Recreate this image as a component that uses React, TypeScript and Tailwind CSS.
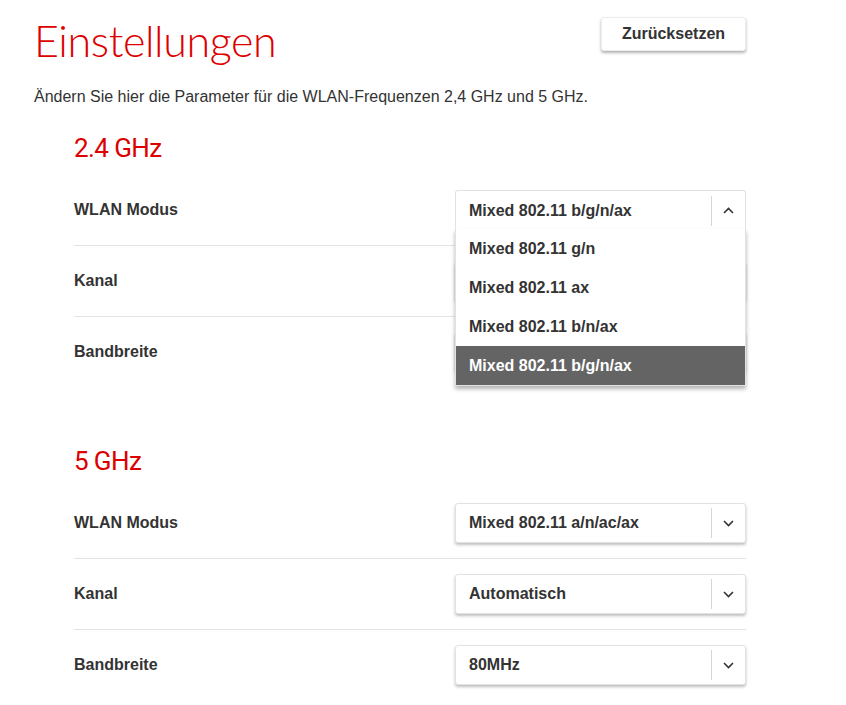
import React from "react";

const RED = "text-[#dc0000]";
const HEAD_FONT = { fontFamily: 'Lato, "Open Sans", sans-serif' };
const SUB_FONT = { fontFamily: 'Roboto, Lato, sans-serif' };

function Chevron({ up }: { up?: boolean }) {
  return (
    <svg width="11" height="7" viewBox="0 0 11 7" className={up ? "rotate-180" : ""}>
      <path d="M1 1l4.5 4.5L10 1" fill="none" stroke="#333" strokeWidth="1.6" />
    </svg>
  );
}

function Select({ value, options, open }: { value: string; options?: string[]; open?: boolean }) {
  return (
    <div className="relative w-[291px]">
      <div
        className={`flex h-[40px] items-center bg-white border border-[#e2e2e2] ${
          open ? "rounded-t-[3px] border-b-0" : "rounded-[3px] shadow-[0_2px_3px_rgba(0,0,0,0.25)]"
        }`}
      >
        <span className="flex-1 pl-[13px] text-[16px] font-bold text-[#333]">{value}</span>
        <span className="h-[30px] w-px bg-[#d6d6d6]" />
        <span className="flex w-[33px] justify-center">
          <Chevron up={open} />
        </span>
      </div>
      {open && options ? (
        <div className="absolute left-0 right-0 top-[39px] z-10 bg-white border border-t-0 border-[#e2e2e2] shadow-[0_3px_4px_rgba(0,0,0,0.3)]">
          {options.map((o) => (
            <div
              key={o}
              className={`flex h-[39px] items-center pl-[13px] text-[16px] font-bold ${
                o === value ? "bg-[#646464] text-white" : "text-[#333]"
              }`}
            >
              {o}
            </div>
          ))}
        </div>
      ) : null}
    </div>
  );
}

function Row({ label, last, children }: { label: string; last?: boolean; children: React.ReactNode }) {
  return (
    <div className={`flex items-center justify-between py-[15px] ${last ? "" : "border-b border-[#e4e4e4]"}`}>
      <span className="text-[16px] font-bold text-[#333]">{label}</span>
      {children}
    </div>
  );
}

export default function App() {
  const font = { fontFamily: '"Liberation Sans", Arial, sans-serif' };
  return (
    <div className="min-h-[705px] w-[846px] bg-white pl-[34px]" style={font}>
      <div className="flex w-[712px] items-start justify-between pt-[17px]">
        <h1 className={`${RED} text-[43px] leading-[48px] tracking-[-0.4px] font-light`} style={HEAD_FONT}>
          Einstellungen
        </h1>
        <button className="h-[34px] w-[145px] rounded-[3px] bg-white border border-[#ececec] shadow-[0_2px_3px_rgba(0,0,0,0.3)] text-[16px] font-bold text-[#333]">
          Zurücksetzen
        </button>
      </div>
      <p className="mt-[20px] text-[16px] text-[#333]">
        Ändern Sie hier die Parameter für die WLAN-Frequenzen 2,4 GHz und 5 GHz.
      </p>

      <div className="ml-[40px] w-[672px]">
        <h2 className={`${RED} mt-[22px] text-[26px] leading-[34px] font-normal tracking-[-0.6px]`} style={SUB_FONT}>
          2.4 GHz
        </h2>
        <div className="mt-[10px]">
          <Row label="WLAN Modus">
            <Select
              value="Mixed 802.11 b/g/n/ax"
              open
              options={["Mixed 802.11 g/n", "Mixed 802.11 ax", "Mixed 802.11 b/n/ax", "Mixed 802.11 b/g/n/ax"]}
            />
          </Row>
          <Row label="Kanal">
            <Select value="" />
          </Row>
          <Row label="Bandbreite" last>
            <Select value="" />
          </Row>
        </div>

        <h2 className={`${RED} mt-[57px] text-[26px] leading-[34px] font-normal tracking-[-0.6px]`} style={SUB_FONT}>
          5 GHz
        </h2>
        <div className="mt-[10px]">
          <Row label="WLAN Modus">
            <Select value="Mixed 802.11 a/n/ac/ax" />
          </Row>
          <Row label="Kanal">
            <Select value="Automatisch" />
          </Row>
          <Row label="Bandbreite" last>
            <Select value="80MHz" />
          </Row>
        </div>
      </div>
    </div>
  );
}
